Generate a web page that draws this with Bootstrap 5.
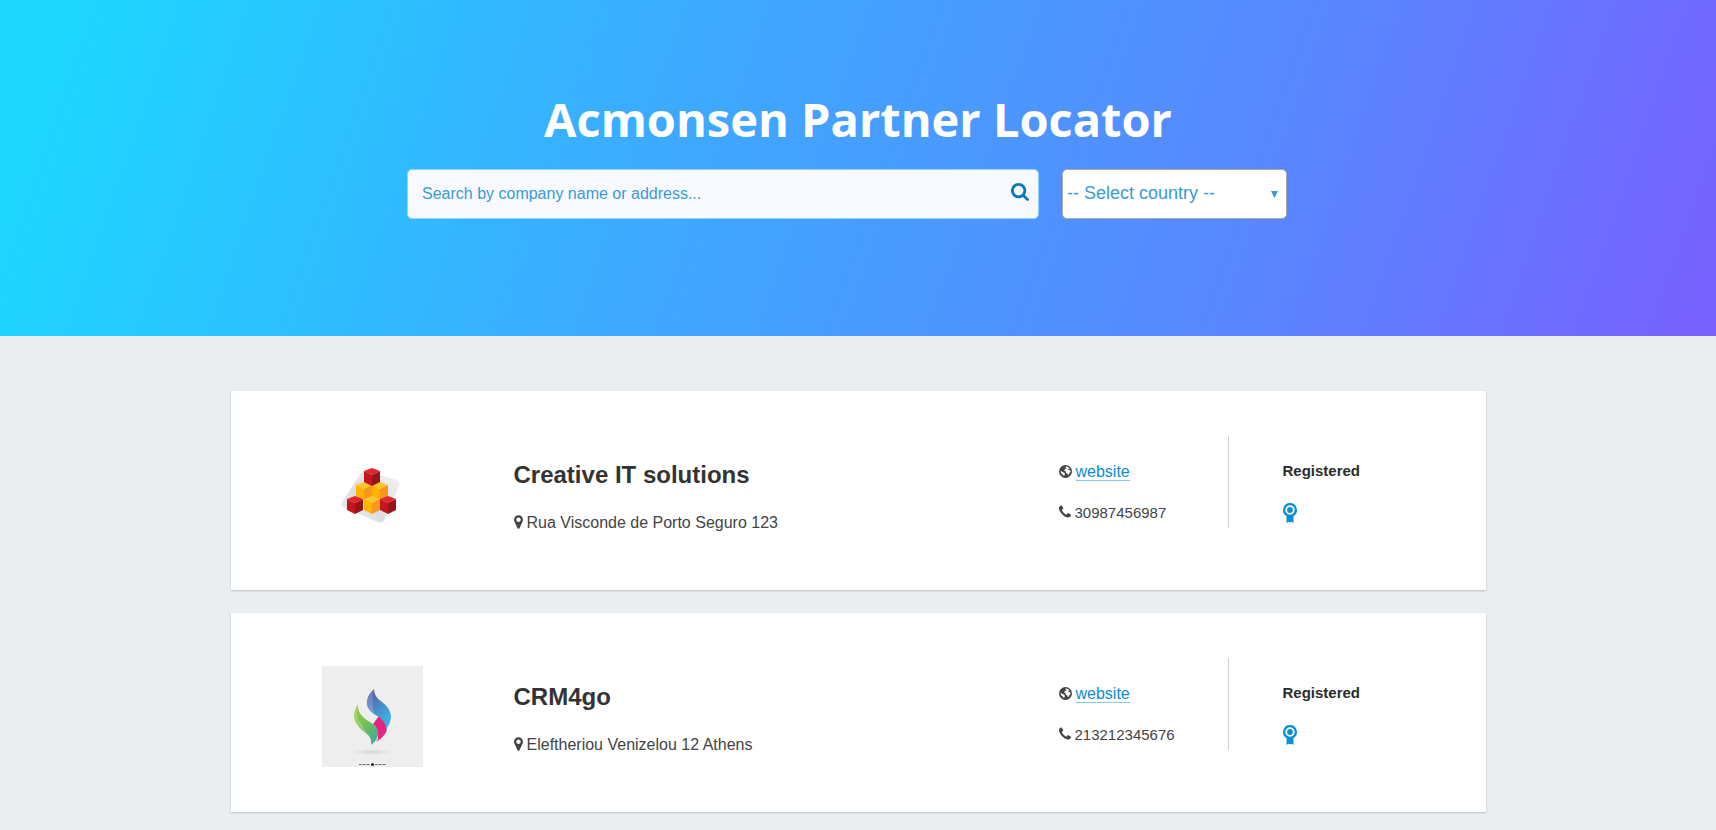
<!DOCTYPE html>
<html lang="en">
<head>
<meta charset="utf-8">
<meta name="viewport" content="width=device-width, initial-scale=1">
<title>Acmonsen Partner Locator</title>
<link href="https://cdn.jsdelivr.net/npm/bootstrap@5.3.0/dist/css/bootstrap.min.css" rel="stylesheet">
<style>
  body { background: #eaeef1; color: #444; font: 16px/24px "Liberation Sans", Arial, sans-serif; }
  .hero { background: linear-gradient(109deg, #1ed5ff 5%, #3cabff 38%, #5a84ff 75%, #7b5dff 102%); padding: 90px 16px 117px; }
  .hero h1 { font: 700 47px/58px "Open Sans", sans-serif; margin-bottom: 21px; color: #fff; }
  .finder { max-width: 902px; gap: 23px; padding-right: 22px; }
  .finder-search { height: 50px; background: #f8f9ff; border: 1px solid #90d4fb; border-radius: 5px; padding-right: 9px; }
  .finder-search input { font-size: 16px; color: #3a9bcf; padding: 0 14px; }
  .finder-search input::placeholder { color: #3a9bcf; opacity: 1; }
  .finder-search svg { width: 18px; height: 18px; fill: #0b76bc; margin-bottom: 4px; }
  .finder-country { position: relative; flex: 0 0 225px; }
  .finder-country select { appearance: none; height: 50px; font-size: 18px; color: #3a9bcf; background: #fff; border: 1px solid #a9a9a9; border-radius: 5px; padding: 0 4px 2px; }
  .finder-country svg { position: absolute; right: 9px; top: 22px; width: 7px; height: 7px; fill: #3a9bcf; pointer-events: none; }
  .partners { max-width: 1255px; padding-top: 55px; padding-bottom: 12px; }
  .partner { background: #fff; padding: 45px 0; margin-bottom: 23px; box-shadow: 0 1px 2px rgba(0,0,0,.2); }
  .partner:last-child { margin-bottom: 0; }
  .partner-logo { flex: 0 0 283px; padding-top: 8px; }
  .partner-logo svg { display: block; width: 101px; height: 101px; margin: 0 auto; }
  .partner-info { padding-top: 25px; }
  .partner-info h2 { font-size: 24px; line-height: 28px; font-weight: 700; color: #333; margin-bottom: 22px; }
  .partner-contact { flex: 0 0 170px; min-height: 92px; padding-top: 24px; border-right: 1px solid #c9d2d8; }
  .partner-contact a { color: #0d8bd1; text-decoration: none; border-bottom: 1px solid #86c8e8; }
  .phone { font-size: 15px; margin-top: 17px; }
  .partner-level { flex: 0 0 257px; padding: 23px 0 0 54px; }
  .partner-level h3 { font-size: 15px; line-height: 24px; font-weight: 700; color: #2c2c2c; margin-bottom: 20px; }
  .partner-level svg { display: block; width: 14px; height: 20px; }
  .glyph { height: 16px; fill: #444; vertical-align: -2px; margin-right: 4px; }
  .w-pin { width: 9px; }
  .w-globe { width: 13px; height: 13px; vertical-align: -1px; }
  .w-phone { width: 12px; }
</style>
</head>
<body>
<svg class="d-none" aria-hidden="true">
  <symbol id="pin" viewBox="0 0 1024 1792"><path d="M768 640q0-106-75-181t-181-75-181 75-75 181 75 181 181 75 181-75 75-181zm256 0q0 109-33 179l-364 774q-16 33-47.500 52t-67.500 19-67.500-19-46.500-52l-365-774q-33-70-33-179 0-212 150-362t362-150 362 150 150 362z"/></symbol>
  <symbol id="phone" viewBox="0 0 1408 1792"><path d="M1408 1240q0 27-10 70.500t-21 68.500q-21 50-122 106-94 51-186 51-27 0-53-3.500t-57.500-12.500-47-14.500-55.500-20.500-49-18q-98-35-175-83-127-79-264-216t-216-264q-48-77-83-175-3-9-18-49t-20.500-55.500-14.500-47-12.500-57.500-3.500-53q0-92 51-186 56-101 106-122 25-11 68.500-21t70.500-10q14 0 21 3 18 6 53 76 11 19 30 54t35 63.500 31 53.500q3 4 17.500 25t21.500 35.500 7 28.500q0 20-28.500 50t-62 55-62 53-28.500 46q0 9 5 22.500t8.500 20.500 14 24 11.500 19q76 137 174 235t235 174q2 1 19 11.500t24 14 20.500 8.500 22.500 5q18 0 46-28.500t53-62 55-62 50-28.500q14 0 28.500 7t35.500 21.500 25 17.500q25 15 53.500 31t63.500 35 54 30q70 35 76 53 3 7 3 21z"/></symbol>
  <symbol id="globe" viewBox="0 0 26 26"><circle cx="13" cy="13" r="13"/><path fill="#fff" d="M14 3l4 1 4 4-3-1-1 2 3 1 3 3-2 1-2 4-2 3-1-4-3-1-1-4-3-1 2-3 3-1-1-2-2-1zM3 11l4 3 3 1 2 3-2 4-3-3-3-3z"/></symbol>
  <symbol id="award" viewBox="0 0 14 20"><path fill="#0d8fd6" fill-rule="evenodd" d="M7 0a7 7 0 0 1 3.500 13V20L8.500 18.800 7 19.500 5.500 18.800 3.500 20V13A7 7 0 0 1 7 0zM7 2.300a4.700 4.700 0 1 0 0 9.400a4.700 4.700 0 1 0 0-9.400z"/><circle cx="7" cy="7" r="2.900" fill="#0d8fd6"/></symbol>
  <symbol id="cube-red" viewBox="0 0 18 18"><path fill="#e3242b" d="M9 0l8 3-8 4-8-4z"/><path fill="#c4161c" d="M1 3l8 4v11l-8-4z"/><path fill="#98141a" d="M17 3L9 7v11l8-4z"/></symbol>
  <symbol id="cube-gold" viewBox="0 0 18 18"><path fill="#ffc62a" d="M9 0l8 3-8 4-8-4z"/><path fill="#ffb500" d="M1 3l8 4v11l-8-4z"/><path fill="#f8961d" d="M17 3L9 7v11l8-4z"/></symbol>
</svg>

<header class="hero">
  <h1 class="text-center">Acmonsen Partner Locator</h1>
  <form class="finder d-flex mx-auto" onsubmit="return false">
    <div class="finder-search d-flex align-items-center flex-grow-1">
      <input class="form-control border-0 bg-transparent shadow-none h-100" type="text" placeholder="Search by company name or address..." aria-label="Search by company name or address">
      <button class="btn border-0 p-0 d-flex" type="submit" aria-label="Search">
        <svg viewBox="64 128 1664 1664"><path d="M1216 832q0-185-131.500-316.500t-316.500-131.500-316.500 131.500-131.500 316.500 131.500 316.500 316.500 131.500 316.500-131.500 131.500-316.500zm512 832q0 52-38 90t-90 38q-54 0-90-38l-343-342q-179 124-399 124-143 0-273.500-55.500t-225-150-150-225-55.500-273.500 55.500-273.500 150-225 225-150 273.500-55.500 273.500 55.500 225 150 150 225 55.500 273.500q0 220-124 399l343 343q37 37 37 90z"/></svg>
      </button>
    </div>
    <div class="finder-country">
      <select class="d-block w-100" aria-label="Country"><option>-- Select country --</option></select>
      <svg viewBox="0 0 7 7"><path d="M0 0h7L3.500 7z"/></svg>
    </div>
  </form>
</header>

<main class="partners mx-auto">
  <article class="partner d-flex align-items-start">
    <div class="partner-logo">
      <svg viewBox="0 0 101 101" role="img" aria-label="Creative IT solutions logo">
        <defs><linearGradient id="plate" x1="0" y1="1" x2="1" y2="0"><stop offset="0" stop-color="#f3f3f3"/><stop offset=".4" stop-color="#dcdde0"/><stop offset="1" stop-color="#f4f4f5"/></linearGradient></defs>
        <path fill="url(#plate)" d="M41 26l34 10q4 2 2 6L62 76q-2 4-6 2L22 64q-4-2-2-6z"/>
        <use href="#cube-gold" x="33" y="38" width="18" height="18"/>
        <use href="#cube-gold" x="49" y="38" width="18" height="18"/>
        <use href="#cube-red" x="41" y="24" width="18" height="18"/>
        <use href="#cube-red" x="24" y="52" width="18" height="18"/>
        <use href="#cube-red" x="57" y="52" width="18" height="18"/>
        <use href="#cube-gold" x="41" y="52" width="18" height="18"/>
      </svg>
    </div>
    <div class="partner-info flex-grow-1">
      <h2>Creative IT solutions</h2>
      <div><svg class="glyph w-pin"><use href="#pin"/></svg>Rua Visconde de Porto Seguro 123</div>
    </div>
    <div class="partner-contact">
      <div><svg class="glyph w-globe"><use href="#globe"/></svg><a href="#">website</a></div>
      <div class="phone"><svg class="glyph w-phone"><use href="#phone"/></svg>30987456987</div>
    </div>
    <div class="partner-level">
      <h3>Registered</h3>
      <svg><use href="#award"/></svg>
    </div>
  </article>

  <article class="partner d-flex align-items-start">
    <div class="partner-logo">
      <svg viewBox="0 0 101 101" role="img" aria-label="CRM4go logo">
        <defs>
          <linearGradient id="blue" x1="0" y1="0" x2=".5" y2="1"><stop offset="0" stop-color="#56469b"/><stop offset=".5" stop-color="#4c86c6"/><stop offset="1" stop-color="#39b4e6"/></linearGradient>
          <linearGradient id="green" x1="0" y1="0" x2=".7" y2="1"><stop offset="0" stop-color="#a5cf3c"/><stop offset=".5" stop-color="#79bf55"/><stop offset="1" stop-color="#43ad92"/></linearGradient>
          <radialGradient id="shade"><stop offset="0" stop-color="#d4d4d4"/><stop offset="1" stop-color="#eee"/></radialGradient>
        </defs>
        <path fill="#eee" d="M0 0h101v101H0z"/>
        <ellipse cx="50" cy="86" rx="20" ry="3" fill="url(#shade)"/>
        <path fill="#e5267e" d="M57 50q-3 4-6 8 6 5 5 15l-2 3q11-7 11-14-1-7-8-12z"/>
        <path fill="url(#blue)" d="M52 23q-8 7-7 16 1 5 7 9 13 7 12 15 5-6 5-13-1-8-9-14-8-5-8-13z"/>
        <path fill="#fff" opacity=".2" d="M52 23q-8 7-7 16 1 5 7 9-3-13 0-25z"/>
        <path fill="url(#green)" d="M36 38q-6 9-3 17 3 7 12 13 5 4 4 11 8-6 7-13-1-6-8-10-13-7-12-18z"/>
        <path fill="#fff" opacity=".2" d="M36 38q-6 9-3 17 3 7 12 13-3-7-8-13-4-7-1-17z"/>
        <path fill="none" stroke="#666" stroke-dasharray="2 .5 1 .5" d="M37 98.500h11M53 98.500h11"/><circle cx="50.500" cy="98.500" r="1.500" fill="#222"/>
      </svg>
    </div>
    <div class="partner-info flex-grow-1">
      <h2>CRM4go</h2>
      <div><svg class="glyph w-pin"><use href="#pin"/></svg>Eleftheriou Venizelou 12 Athens</div>
    </div>
    <div class="partner-contact">
      <div><svg class="glyph w-globe"><use href="#globe"/></svg><a href="#">website</a></div>
      <div class="phone"><svg class="glyph w-phone"><use href="#phone"/></svg>213212345676</div>
    </div>
    <div class="partner-level">
      <h3>Registered</h3>
      <svg><use href="#award"/></svg>
    </div>
  </article>
</main>
<script src="https://cdn.jsdelivr.net/npm/bootstrap@5.3.0/dist/js/bootstrap.bundle.min.js"></script>
</body>
</html>
